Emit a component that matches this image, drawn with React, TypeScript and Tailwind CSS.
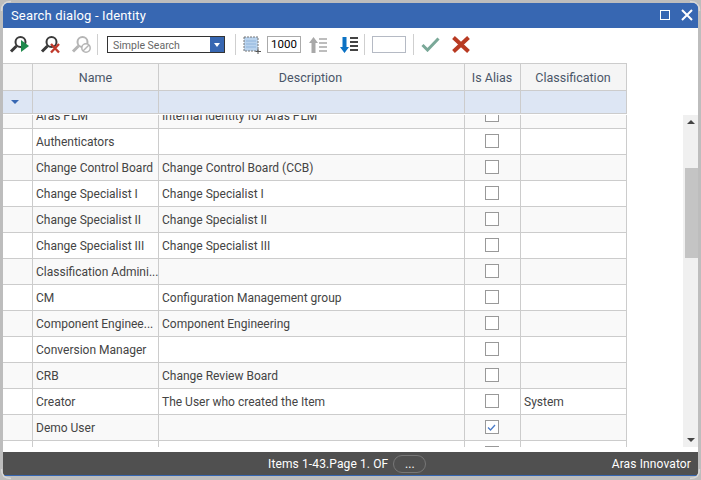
import React from "react";

const rows: [string, string, boolean, string][] = [
  ["Aras PLM", "Internal identity for Aras PLM", false, ""],
  ["Authenticators", "", false, ""],
  ["Change Control Board", "Change Control Board (CCB)", false, ""],
  ["Change Specialist I", "Change Specialist I", false, ""],
  ["Change Specialist II", "Change Specialist II", false, ""],
  ["Change Specialist III", "Change Specialist III", false, ""],
  ["Classification Admini...", "", false, ""],
  ["CM", "Configuration Management group", false, ""],
  ["Component Enginee...", "Component Engineering", false, ""],
  ["Conversion Manager", "", false, ""],
  ["CRB", "Change Review Board", false, ""],
  ["Creator", "The User who created the Item", false, "System"],
  ["Demo User", "", true, ""],
  ["", "", false, ""],
];

const cols = "grid grid-cols-[30px_126px_306px_56px_106px]";
const cell = "border-r border-[#cccccc] flex items-center overflow-hidden whitespace-nowrap";

function Magnifier({ color }: { color: string }) {
  return (
    <>
      <circle cx="11.5" cy="7" r="5" fill="none" stroke={color} strokeWidth="2" />
      <path d="M7.5 11 L2 16.5" stroke={color} strokeWidth="3" />
    </>
  );
}

function Sep() {
  return <div className="w-px h-[21px] bg-[#cfcfcf] shrink-0" />;
}

export default function App() {
  return (
    <div className="relative w-[701px] h-[480px] bg-[#bdbdbd] pt-[3px] px-[3px] pb-[4px] flex flex-col overflow-hidden font-['Roboto',sans-serif] text-[12px] text-[#444444]">
      {/* title */}
      <div className="h-[25px] shrink-0 bg-[#3767b2] flex items-center pl-2 pr-[5px] text-white">
        <span className="text-[13px] tracking-[0.15px]">Search dialog - Identity</span>
        <div className="ml-auto flex items-center gap-[11px] -mt-px">
          <div className="w-[10px] h-[10px] border border-white" />
          <svg width="12" height="12" viewBox="0 0 12 12">
            <path d="M1 1 L11 11 M11 1 L1 11" stroke="#ffffff" strokeWidth="2" />
          </svg>
        </div>
      </div>
      {/* toolbar */}
      <div className="h-[35px] shrink-0 bg-white flex items-center pb-[2px]">
        <svg className="ml-[6px] shrink-0" width="20" height="19" viewBox="0 0 20 19">
          <Magnifier color="#3a3a3a" />
          <path d="M12 5 L20 11 L12 17 Z" fill="#1f8a4c" />
        </svg>
        <svg className="ml-[11px] shrink-0" width="20" height="19" viewBox="0 0 20 19">
          <Magnifier color="#3a3a3a" />
          <path d="M11 9 L19 17.5 M19 9 L11 17.5" stroke="#c0392b" strokeWidth="2.4" />
        </svg>
        <svg className="ml-[11px] shrink-0" width="20" height="19" viewBox="0 0 20 19">
          <Magnifier color="#b5b5b5" />
          <circle cx="15" cy="13" r="4.2" fill="#ffffff" stroke="#b5b5b5" strokeWidth="1.5" />
          <path d="M12 16 L18 10" stroke="#b5b5b5" strokeWidth="1.5" />
        </svg>
        <div className="ml-[6px]"><Sep /></div>
        <div className="ml-[9px] w-[118px] h-[17px] border border-[#333333] flex items-center shrink-0">
          <span className="pl-[5px] pt-[2px] text-[10.5px] text-[#666666] flex-1">Simple Search</span>
          <div className="w-[14px] h-full bg-[#3767b2] flex items-center justify-center">
            <div className="w-0 h-0 border-x-[3px] border-x-transparent border-t-[4px] border-t-white" />
          </div>
        </div>
        <div className="ml-[10px]"><Sep /></div>
        <svg className="ml-[7px] shrink-0" width="18" height="18" viewBox="0 0 18 18">
          <rect x="1" y="1" width="14" height="14" fill="#b9d3ee" stroke="#777777" strokeDasharray="2 1" />
          <path d="M3 5 H13 M3 8 H13 M3 11 H13" stroke="#8fb4dc" strokeWidth="1" />
          <path d="M15 13 V18 M12.5 15.5 H18" stroke="#555555" strokeWidth="1" />
        </svg>
        <div className="ml-[6px] w-[34px] h-[17px] border border-[#aaaaaa] flex items-center pl-[3px] text-[11.5px] text-black shrink-0">1000</div>
        <svg className="ml-[8px] shrink-0" width="18" height="18" viewBox="0 0 18 18">
          <path d="M4.5 1 L9 7 H6.5 V17 H2.5 V7 H0 Z" fill="#a8a8a8" />
          <path d="M10 3 H18 M10 7 H18 M10 11 H18 M10 15 H18" stroke="#a8a8a8" strokeWidth="1.6" />
        </svg>
        <svg className="ml-[13px] shrink-0" width="18" height="18" viewBox="0 0 18 18">
          <path d="M4.5 17 L9 11 H6.5 V1 H2.5 V11 H0 Z" fill="#0b72c4" />
          <path d="M10 2 H18 M10 6 H18 M10 10 H18 M10 14 H18" stroke="#444444" strokeWidth="1.8" />
        </svg>
        <div className="ml-[6px]"><Sep /></div>
        <div className="ml-[7px] w-[34px] h-[17px] border border-[#b5bac4] shrink-0" />
        <div className="ml-[7px]"><Sep /></div>
        <svg className="ml-[7px] shrink-0" width="19" height="15" viewBox="0 0 19 15">
          <path d="M1.5 8 L6.5 13 L17.5 1.5" fill="none" stroke="#7aa898" strokeWidth="3" />
        </svg>
        <svg className="ml-[12px] shrink-0" width="18" height="17" viewBox="0 0 18 17">
          <path d="M1.5 1.5 L16.5 15.5 M16.5 1.5 L1.5 15.5" stroke="#b83a22" strokeWidth="4" />
        </svg>
      </div>
      {/* header */}
      <div className="shrink-0 bg-white">
        <div className={`${cols} w-[624px] h-[28px] bg-[#f5f5f5] border-y border-[#cccccc] text-[#4a5568] text-[12.5px]`}>
          <div className={cell} />
          <div className={`${cell} justify-center pt-[2px]`}>Name</div>
          <div className={`${cell} justify-center pt-[2px] pr-[2px]`}>Description</div>
          <div className={`${cell} justify-center pt-[2px] pr-px`}>Is Alias</div>
          <div className={`${cell} justify-center pt-[2px] pr-px`}>Classification</div>
        </div>
        <div className={`${cols} w-[624px] h-[23px] bg-[#dde6f4] border-b border-[#cccccc]`}>
          <div className={`${cell} justify-center`}>
            <div className="w-0 h-0 border-x-[4px] border-x-transparent border-t-[4px] border-t-[#3767b2] mr-[6px]" />
          </div>
          <div className={cell} />
          <div className={cell} />
          <div className={cell} />
          <div className={cell} />
        </div>
      </div>
      {/* body */}
      <div className="h-[338px] shrink-0 bg-white pt-px flex flex-col">
        <div className="h-[332px] flex">
          <div className="w-[624px] overflow-hidden">
            <div className="-mt-[12px]">
              {rows.map((r, i) => (
                <div key={i} className={`${cols} h-[26px] border-b border-[#cccccc] ${i % 2 === 0 ? "bg-[#f9f9f9]" : "bg-white"}`}>
                  <div className={cell} />
                  <div className={`${cell} pl-[3px]`}>{r[0]}</div>
                  <div className={`${cell} pl-[3px]`}>{r[1]}</div>
                  <div className={`${cell} justify-center pr-[2px]`}>
                    <div className="w-[14px] h-[14px] -mt-px border border-[#999999] bg-white flex items-center justify-center">
                      {r[2] && (
                        <svg width="9" height="7" viewBox="0 0 9 7">
                          <path d="M1 3.5 L3.5 6 L8 1" fill="none" stroke="#4a7bc8" strokeWidth="1.3" />
                        </svg>
                      )}
                    </div>
                  </div>
                  <div className={`${cell} pl-[3px]`}>{r[3]}</div>
                </div>
              ))}
            </div>
          </div>
          <div className="flex-1" />
          <div className="w-[15px] bg-[#f0f0f0] flex flex-col items-center justify-between">
            <div className="h-[53px] w-full flex justify-center pt-[5px]">
              <div className="w-0 h-0 border-x-[4px] border-x-transparent border-b-[4px] border-b-[#444444]" />
            </div>
            <div className="h-[90px] w-[13px] self-end bg-[#c4c4c4]" />
            <div className="h-[189px] w-full flex justify-center items-end pb-[5px]">
              <div className="w-0 h-0 border-x-[4px] border-x-transparent border-t-[4px] border-t-[#444444]" />
            </div>
          </div>
        </div>
      </div>
      {/* status */}
      <div className="h-[24px] shrink-0 bg-[#505050] border-b border-[#3767b2] flex items-center text-white pr-[7px] tracking-[0.12px] relative">
        <div className="absolute left-[265px] flex items-center">
          <span>Items 1-43.Page 1. OF</span>
          <div className="ml-[5px] w-[33px] h-[18px] rounded-full border border-[#777777] flex items-center justify-center leading-none">...</div>
        </div>
        <span className="ml-auto">Aras Innovator</span>
      </div>
      {/* window corners */}
      <svg className="absolute left-0 top-0" width="12" height="12" viewBox="0 0 12 12">
        <path d="M1.5 11 Q1.5 1.5 11 1.5" fill="none" stroke="#d8d8d8" strokeWidth="1.5" />
      </svg>
      <svg className="absolute right-0 top-0" width="12" height="12" viewBox="0 0 12 12">
        <path d="M1 1.5 Q10.5 1.5 10.5 11" fill="none" stroke="#d8d8d8" strokeWidth="1.5" />
      </svg>
      <svg className="absolute left-0 bottom-0" width="12" height="12" viewBox="0 0 12 12">
        <path d="M1.5 1 Q1.5 10.5 11 10.5" fill="none" stroke="#d8d8d8" strokeWidth="1.5" />
      </svg>
      <svg className="absolute right-0 bottom-0" width="12" height="12" viewBox="0 0 12 12">
        <path d="M1 10.5 Q10.5 10.5 10.5 1" fill="none" stroke="#d8d8d8" strokeWidth="1.5" />
      </svg>
    </div>
  );
}
